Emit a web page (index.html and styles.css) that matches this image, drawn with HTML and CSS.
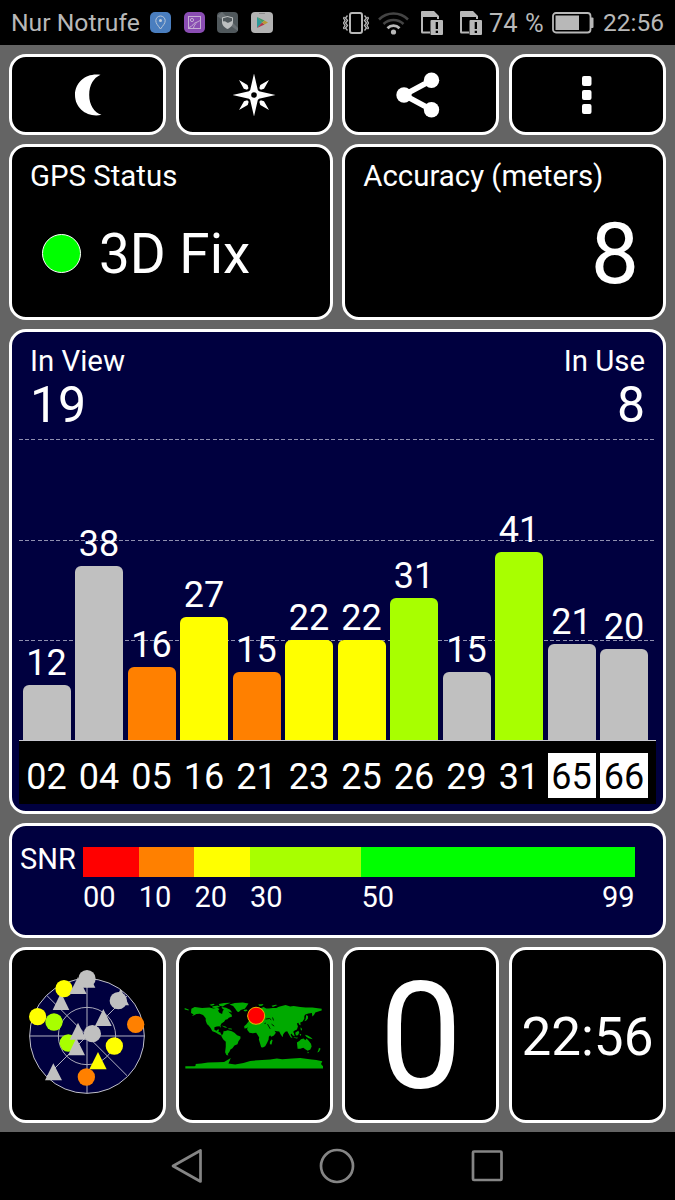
FILE: index.html
```html
<!DOCTYPE html>
<html lang="en">
<head>
    <meta charset="UTF-8">
    <meta name="viewport" content="width=device-width, initial-scale=1.0">
    <title>GPS Status</title>
    <link rel="stylesheet" href="styles.css">
</head>
<body>

<header class="status-bar">
    <span class="carrier">Nur Notrufe</span>
    <div class="notifications">
        <svg width="21" height="21" viewBox="0 0 21 21">
            <rect width="21" height="21" rx="5" fill="#4a7ebf"/>
            <path d="M10.5 17C8 13.5 5.8 11.500 5.800 8.700a4.700 4.700 0 0 1 9.400 0C15.200 11.500 13 13.500 10.500 17z" fill="none" stroke="#b9c7d8"/>
            <circle cx="10.500" cy="8.500" r="1.500" fill="#c4cfdc"/>
        </svg>
        <svg width="21" height="21" viewBox="0 0 21 21">
            <rect width="21" height="21" rx="5" fill="#8a4db3"/>
            <rect x="4.500" y="4.500" width="12" height="12" fill="none" stroke="#c5aed3"/>
            <circle cx="8" cy="8" r="1.600" fill="none" stroke="#c5aed3"/>
            <path d="M5 15.500c3.500-.5 4-4.500 7-5 1.500-.3 2.500-1.500 4.500-2M9.500 16c.5-2 1.500-4 3-5" fill="none" stroke="#c5aed3"/>
        </svg>
        <svg width="21" height="21" viewBox="0 0 21 21">
            <rect width="21" height="21" rx="4" fill="#50585c"/>
            <path d="M0 4L21 19v-3L5 0z" fill="#697074"/>
            <path d="M5 5.500l5.500-1.500L16 5.500V10c0 3.500-2.500 5.500-5.500 7C7.500 15.500 5 13.500 5 10z" fill="#bcbfc0"/>
            <path d="M6 6.300l4.500-1.200L15 6.300V9c-2 .3-3 2.500-5 1.500C8.500 9.500 7.500 9 6 9.500z" fill="#50585c"/>
        </svg>
        <svg width="22" height="21" viewBox="0 0 22 21">
            <rect width="22" height="21" rx="4" fill="#b3b3b3"/>
            <path d="M8 1.500h6" stroke="#8c8c8c"/>
            <path d="M6 5v11l5-5.500z" fill="#2d9a9a"/>
            <path d="M6 5l5 5.500 2.500-2z" fill="#3f9c66"/>
            <path d="M6 16l5-5.500 2.500 2z" fill="#b1384a"/>
            <path d="M13.500 8.500L17 10.500l-3.500 2-2.500-2z" fill="#b99a35"/>
        </svg>
    </div>
    <div class="indicators">
        <svg class="vibrate" width="26" height="24" viewBox="0 0 26 24">
            <rect x="7" y="2" width="12" height="20" rx="2" fill="none" stroke="#b8b8b8" stroke-width="2"/>
            <path d="M4.500 4.500l-2 2.500 2 2.500-2 2.500 2 2.500-2 2.500 2 2.500M1.500 6L.5 7.200l1.500 2.300L.5 12 2 14.500.5 17l1 1.200M21.500 4.500l2 2.500-2 2.500 2 2.500-2 2.500 2 2.500-2 2.500M24.500 6l1 1.200L24 9.500l1.500 2.500-1.500 2.500 1.500 2.500-1 1.200" fill="none" stroke="#b8b8b8" stroke-width="1.300"/>
        </svg>
        <svg class="wifi" width="31" height="24" viewBox="0 0 31 24" fill="none" stroke-width="2.500">
            <path d="M1 8.500a20.500 20.500 0 0 1 29 0" stroke="#444"/>
            <path d="M5.500 13a14.200 14.200 0 0 1 20 0" stroke="#444"/>
            <path d="M9.500 17.200a8.500 8.500 0 0 1 12 0" stroke="#b8b8b8" stroke-width="2.800"/>
            <circle cx="15.500" cy="21" r="2.600" fill="#b8b8b8"/>
        </svg>
        <svg class="sim-one" width="22" height="24" viewBox="0 0 22 24">
            <path id="sim" d="M1 0h12l5 5v3h-2V6H2v14.500h7v2H1.500A1.500 1.500 0 0 1 0 21V1a1 1 0 0 1 1-1zM10.500 9H21a1 1 0 0 1 1 1v13a1 1 0 0 1-1 1H10.500a1 1 0 0 1-1-1V10a1 1 0 0 1 1-1zM14.700 11v7h2.300v-7zM14.700 19.700v2.300H17v-2.300z" fill="#b8b8b8" fill-rule="evenodd"/>
        </svg>
        <svg class="sim-two" width="22" height="24" viewBox="0 0 22 24">
            <use href="#sim"/>
        </svg>
        <span class="percent">74 %</span>
        <svg class="battery" width="42" height="22" viewBox="0 0 42 22">
            <rect x="1" y="1" width="37.500" height="19.500" rx="3" fill="none" stroke="#b8b8b8" stroke-width="1.800"/>
            <rect x="3.500" y="3.500" width="23.500" height="14.500" fill="#b8b8b8"/>
            <path d="M39 5.500h1.500a1 1 0 0 1 1 1v8.500a1 1 0 0 1-1 1H39z" fill="#b8b8b8"/>
        </svg>
        <span class="clock">22:56</span>
    </div>
</header>

<main class="dashboard">
    <button class="card icon-button">
        <svg width="28" height="42" viewBox="0 0 28 42">
            <path d="M26.500 .8C19.500 4 15.200 11 15.200 21c0 10 5 17.500 12.300 19.800C14 43.800 1 35 1 21 1 7.500 13 -1.500 26.500 .8z" fill="#fff"/>
        </svg>
    </button>
    <button class="card icon-button">
        <svg width="44" height="44" viewBox="0 0 44 44">
            <g fill="#fff">
                <path d="M22 .5l3.800 16.500L27 18.200 43.500 22 27 25.800 25.800 27 22 43.500 18.200 27 17 25.800.5 22 17 18.200 18.200 17z"/>
                <path d="M7 7l8.500 5 1 3.200-1.500 1.500-3.200-1zM37 7l-5 8.700-3.200 1-1.500-1.500 1-3.200zM7 37l5-8.700 3.200-1 1.500 1.500-1 3.200zM37 37l-8.700-5-1-3.200 1.500-1.500 3.200 1z"/>
            </g>
            <circle cx="22" cy="22" r="2.800" fill="#000"/>
        </svg>
    </button>
    <button class="card icon-button share">
        <svg width="44" height="46" viewBox="0 0 44 46" fill="#fff">
            <path d="M36 8L8 23l28 15" fill="none" stroke="#fff" stroke-width="5.500"/>
            <circle cx="35.500" cy="8.200" r="7.700"/>
            <circle cx="8" cy="23" r="7.700"/>
            <circle cx="35.500" cy="37.800" r="7.700"/>
        </svg>
    </button>
    <button class="card icon-button">
        <svg width="10" height="38" viewBox="0 0 10 38" fill="#fff">
            <rect width="9.500" height="10" rx="2"/>
            <rect y="14" width="9.500" height="10" rx="2"/>
            <rect y="28" width="9.500" height="10" rx="2"/>
        </svg>
    </button>

    <section class="card half">
        <h2>GPS Status</h2>
        <div class="fix">
            <span class="fix-dot"></span>
            <span>3D Fix</span>
        </div>
    </section>
    <section class="card half">
        <h2>Accuracy (meters)</h2>
        <div class="accuracy">8</div>
    </section>

    <section class="card wide signal">
        <div class="totals">
            <div>
                <h2>In View</h2>
                <div class="count">19</div>
            </div>
            <div class="in-use">
                <h2>In Use</h2>
                <div class="count">8</div>
            </div>
        </div>
        <div class="plot">
            <div class="grid-lines"><i></i><i></i><i></i></div>
            <div class="sat"><span>12</span><div class="bar" style="height: 55px"></div></div>
            <div class="sat"><span>38</span><div class="bar" style="height: 174px"></div></div>
            <div class="sat"><span>16</span><div class="bar orange" style="height: 73px"></div></div>
            <div class="sat"><span>27</span><div class="bar yellow" style="height: 123.500px"></div></div>
            <div class="sat"><span>15</span><div class="bar orange" style="height: 68.500px"></div></div>
            <div class="sat"><span>22</span><div class="bar yellow" style="height: 100.400px"></div></div>
            <div class="sat"><span>22</span><div class="bar yellow" style="height: 100.400px"></div></div>
            <div class="sat"><span>31</span><div class="bar lime" style="height: 142px"></div></div>
            <div class="sat"><span>15</span><div class="bar" style="height: 68.500px"></div></div>
            <div class="sat"><span>41</span><div class="bar lime" style="height: 187.700px"></div></div>
            <div class="sat"><span>21</span><div class="bar" style="height: 96px"></div></div>
            <div class="sat"><span>20</span><div class="bar" style="height: 91.400px"></div></div>
        </div>
        <div class="sat-ids">
            <span>02</span>
            <span>04</span>
            <span>05</span>
            <span>16</span>
            <span>21</span>
            <span>23</span>
            <span>25</span>
            <span>26</span>
            <span>29</span>
            <span>31</span>
            <span class="glonass">65</span>
            <span class="glonass">66</span>
        </div>
    </section>

    <section class="card wide snr">
        <span class="snr-label">SNR</span>
        <div class="scale">
            <div class="step"><div class="red"></div>00</div>
            <div class="step"><div class="orange"></div>10</div>
            <div class="step"><div class="yellow"></div>20</div>
            <div class="step double"><div class="lime"></div>30</div>
            <div class="step last"><div class="green"></div><p><span>50</span><span>99</span></p></div>
        </div>
    </section>

    <section class="card tile radar-tile">
        <svg class="radar" width="130" height="130" viewBox="37 62 390 390">
            <circle cx="232" cy="257" r="172" fill="#00003f" stroke="#c0c0c8" stroke-width="3"/>
            <circle cx="232" cy="257" r="86" fill="none" stroke="#a8a8b8" stroke-width="3"/>
            <path d="M232 85v344M60 257h344M111 135l241 241M111 378l241-241" stroke="#b0b0c0" stroke-width="3"/>
            <g fill="#c0c0c0">
                <path d="M154 127l25 52h-50zM232 62l25 50h-50zM333 115l25 50h-50zM281 176l25 51h-50zM131 339l26 51h-51z"/>
                <circle cx="326" cy="151" r="26"/>
            </g>
            <circle cx="163" cy="115" r="26" fill="#ff0"/>
            <path d="M205 80l26 51h-52z" fill="#c0c0c0"/>
            <circle cx="232" cy="85" r="26" fill="#c0c0c0"/>
            <circle cx="84" cy="199" r="26" fill="#ff0"/>
            <circle cx="133" cy="215" r="26" fill="#a8ff00"/>
            <circle cx="176" cy="278" r="26" fill="#a8ff00"/>
            <path d="M205 217l25 51h-50zM200 263l26 52h-51z" fill="#c0c0c0"/>
            <circle cx="248" cy="250" r="26" fill="#c0c0c0"/>
            <circle cx="378" cy="222" r="26" fill="#ff8000"/>
            <circle cx="314" cy="287" r="26" fill="#ff0"/>
            <circle cx="230" cy="380" r="26" fill="#ff8000"/>
            <path d="M265 305l26 52h-52z" fill="#ff0"/>
        </svg>
    </section>
    <section class="card tile map-tile">
        <svg class="map" width="139" height="69" viewBox="28 65 416 206">
            <g fill="#00aa00">
                <!-- north america -->
                <path d="M30 86l12 4 0 3-12-3zM50 88l10-5 22 3 22-2 12 3 12-2 6 4-4 5 4 6 8 4 2-9 6-8 8 5 6 8 6 5 2 6-10 4-4 4-6 2-4 6-8 5-3 7 2 6-5-5-8 1-7 2 0 8 6 3 4-4 4 0-2 7 6 2 2 6 6 2-4 2-10-5-8-5-10-4-6-10-6-8-4-3-4-10 0-8-8-9-10-4-10 1-8 4-6 1 6-4-8-4z"/>
                <path d="M112 81l16-3 8 4-12 4-10-1zM132 74l16-3 20-1-16 6-8 5-10-2zM140 83l14 2 12 6 6 8-8-1-10-5-10-4zM104 76l12-3 4 3-10 3zM140 138l12 3 6 4-8-1zM160 146l10 1 2 3-10-1z"/>
                <!-- greenland, iceland, svalbard -->
                <path d="M164 75l16-4 24-2 17 3-5 8-6 8-12 4-6 6-5-2-6-9-6-7zM208 91l8-1 2 4-7 2-5-3zM250 75l16-1-4 5-8 1zM290 79l12-3 6 1-14 6z"/>
                <!-- south america -->
                <path d="M150 155l9-3 12 3 8 5 8 7 10 4 0 6-6 8-3 9-9 4-6 8-6 4-3 7-5 6 2 5-6-2-4-8 2-16 0-15-8-8-5-9 5-8 2-8z"/>
                <!-- europe and asia -->
                <path d="M236 107l4-8 10-4 6-8 10-4 8 4 8 0 12-1 10 0 8-4 20-5 14 4 10-1 20 3 16 1 20 0 28 4 0 5-10 3-9 3-4 8-5 4-1-10-11 1-10 4-2 5 0 7-5 8-7 3 1 8-4-1-3-6-4 2 3 9-3 9-8 4-3 3 3 7-3 5-5-7-3 4 6 10-6-3-6-10-4-8-6 2-6 7-2 9-6-9-4-8-8-1-6-1 4 6-6 8-8 4-7-10-6-12-4-1-10-1-1-4-8-1-6-4-8 2-4 3 1 6-4-3-5-6-6-1-6 6-6 1-1-7 6-5z"/>
                <path d="M394 107l5 3 0 7-5 6-6 2 4-6zM222 97l4 2 4 7-7 2zM377 143l4 5 0 6-4-4zM348 155l8 6 4 10-6-4zM361 160l9-6 3 5-4 8-6 1zM374 163l5 1-3 6zM356 173l14 2-4 2-9-2zM390 166l8 2 10 6 5 5-12-3-7-4z"/>
                <!-- africa -->
                <path d="M224 136l8-5 10-2 8 0 2 4 12 0 10 1 6 12 6 8 8-1-4 10-8 9-1 9-5 10-5 9-7 4-5-1-4-13-3-10 1-6-5-8-4-6-10 1-10-1-7-9 1-9zM290 180l3 2-3 13-5-1 0-7z"/>
                <!-- australia, new zealand -->
                <path d="M366 189l8-5 4-5 8-2 5 5 4-5 6 7 7 9 2 8-4 9-8 4-7-5-6-4-9 3-8 0-1-9zM397 217l5 1-3 4zM432 205l5 3-5 9-5 2 3-7z"/>
                <!-- antarctica -->
                <path d="M32 260h28l4-4-2-3 18-1 20-3 28-1 20-1 10-6 10-6-3 8-4 9 20 3 25-5 20-6 24-2 36-2 20-3 16 2 30-2 24-2 28 4 20 2 18 4-4 8 6 7h25v7H32z"/>
            </g>
            <g stroke="#000" stroke-width="2.500" fill="none">
                <path d="M272 119l12-2 5 4M269 132l4-1M293 114l3 9M278 134l8 14M290 134l8 6"/>
            </g>
            <circle cx="244" cy="109" r="25.500" fill="#f00" stroke="#e6b800" stroke-width="3"/>
        </svg>
    </section>
    <section class="card tile speed">0</section>
    <section class="card tile time">22:56</section>
</main>

<nav class="nav-bar">
    <svg width="34" height="38" viewBox="0 0 34 38"><path d="M30.500 3.500v31L3 19z"/></svg>
    <svg width="38" height="38" viewBox="0 0 38 38"><circle cx="19" cy="19" r="16"/></svg>
    <svg width="34" height="38" viewBox="0 0 34 38"><rect x="3" y="4.500" width="28.500" height="28.500" rx="1"/></svg>
</nav>

</body>
</html>
```

FILE: styles.css
```css
* {
    box-sizing: border-box;
}
body {
    margin: 0;
    width: 675px;
    height: 1200px;
    background-color: #000;
    color: #fff;
    font-family: Roboto, "Liberation Sans", sans-serif;
    overflow: hidden;
}
svg {
    display: block;
    flex: none;
}
h2, p {
    margin: 0;
    font-weight: normal;
}
.status-bar {
    display: flex;
    align-items: center;
    height: 45px;
    padding: 0 12px 0 11px;
    color: #b8b8b8;
    font-size: 24.700px;
    line-height: 48px;
    white-space: nowrap;
}
.carrier {
    width: 139px;
}
.notifications {
    display: flex;
    gap: 12.700px;
}
.indicators {
    display: flex;
    align-items: center;
    margin-left: auto;
}
.wifi {
    margin-left: 9px;
}
.sim-one {
    margin-left: 12px;
}
.sim-two {
    margin-left: 17px;
}
.percent {
    width: 56px;
    margin-left: 7px;
    font-size: 25.500px;
    word-spacing: 1px;
}
.battery {
    margin-left: 7px;
}
.clock {
    width: 60px;
    margin-left: 9px;
    font-size: 24.500px;
}
.dashboard {
    display: grid;
    grid-template-columns: repeat(4, 1fr);
    grid-template-rows: 81px 176px 485px 115px 176px;
    gap: 9px 9.500px;
    height: 1087px;
    padding: 9px;
    background-color: #646464;
}
.card {
    min-width: 0;
    border: 3px solid #fff;
    border-radius: 17px;
    background-color: #000;
    color: #fff;
}
.icon-button {
    display: flex;
    align-items: center;
    justify-content: center;
    padding: 0;
}
.share {
    padding-right: 6px;
}
.half {
    grid-column: span 2;
    padding: 11px 18px;
}
.wide {
    grid-column: span 4;
    background-color: #00003f;
}
h2 {
    font-size: 29.400px;
    line-height: 36px;
}
.fix {
    display: flex;
    align-items: center;
    gap: 18px;
    padding: 27px 0 0 12px;
    font-size: 54.800px;
    line-height: 66px;
}
.fix-dot {
    width: 39px;
    height: 39px;
    margin-bottom: 1px;
    border: 1.500px solid #fff;
    border-radius: 50%;
    background-color: #0f0;
}
.accuracy {
    padding: 10px 6px 0 0;
    font-size: 86px;
    line-height: 100px;
    text-align: right;
}
.signal {
    padding: 11px 7px 0;
}
.totals {
    display: flex;
    justify-content: space-between;
    height: 96px;
    padding: 0 11px;
}
.in-use {
    text-align: right;
}
.count {
    font-size: 50px;
    line-height: 52px;
}
.plot {
    position: relative;
    display: flex;
    align-items: flex-end;
    gap: 4.500px;
    height: 302px;
    padding-left: 3.500px;
    border-bottom: 1px solid #c8c8d0;
}
.grid-lines {
    position: absolute;
    inset: 0;
    display: flex;
    flex-direction: column;
    gap: 99.500px;
}
.grid-lines i {
    height: 1px;
    background: repeating-linear-gradient(90deg, #9090b0 0 4px, transparent 4px 6.250px);
}
.sat {
    position: relative;
    width: 48px;
    font-size: 36px;
    line-height: 44px;
    text-align: center;
}
.sat span {
    display: block;
}
.bar {
    border-radius: 6px 6px 0 0;
    background-color: #c0c0c0;
}
.sat-ids {
    display: flex;
    gap: 4.500px;
    height: 63px;
    padding: 12px 0 0 3.500px;
    background-color: #000;
    font-size: 36px;
    line-height: 48px;
    text-align: center;
}
.sat-ids span {
    width: 48px;
    height: 45px;
}
.sat-ids .glonass {
    background-color: #fff;
    color: #000;
}
.red {
    background-color: #f00;
}
.orange {
    background-color: #ff8000;
}
.yellow {
    background-color: #ff0;
}
.lime {
    background-color: #a8ff00;
}
.green {
    background-color: #0f0;
}
.snr {
    display: flex;
    padding: 20.500px 28.500px 0 8px;
    font-size: 29px;
}
.snr-label {
    width: 63px;
    line-height: 24px;
}
.scale {
    display: flex;
    flex: 1;
}
.step {
    width: 55.700px;
    line-height: 40px;
}
.step > div {
    height: 30.500px;
}
.double {
    width: 111.400px;
}
.last {
    flex: 1;
}
.last p {
    display: flex;
    justify-content: space-between;
}
.tile {
    display: flex;
    align-items: center;
    justify-content: center;
}
.radar-tile, .map-tile {
    padding: 1px 2px 0 0;
}
.radar {
    overflow: visible;
}
.speed {
    padding-top: 6px;
    font-size: 148px;
    line-height: 170px;
}
.time {
    padding-top: 3px;
    font-size: 53px;
}
.nav-bar {
    display: flex;
    align-items: center;
    justify-content: center;
    gap: 114px;
    height: 68px;
    padding-right: 1px;
}
.nav-bar svg {
    fill: none;
    stroke: #858585;
    stroke-width: 2.700;
    stroke-linejoin: round;
}
```
